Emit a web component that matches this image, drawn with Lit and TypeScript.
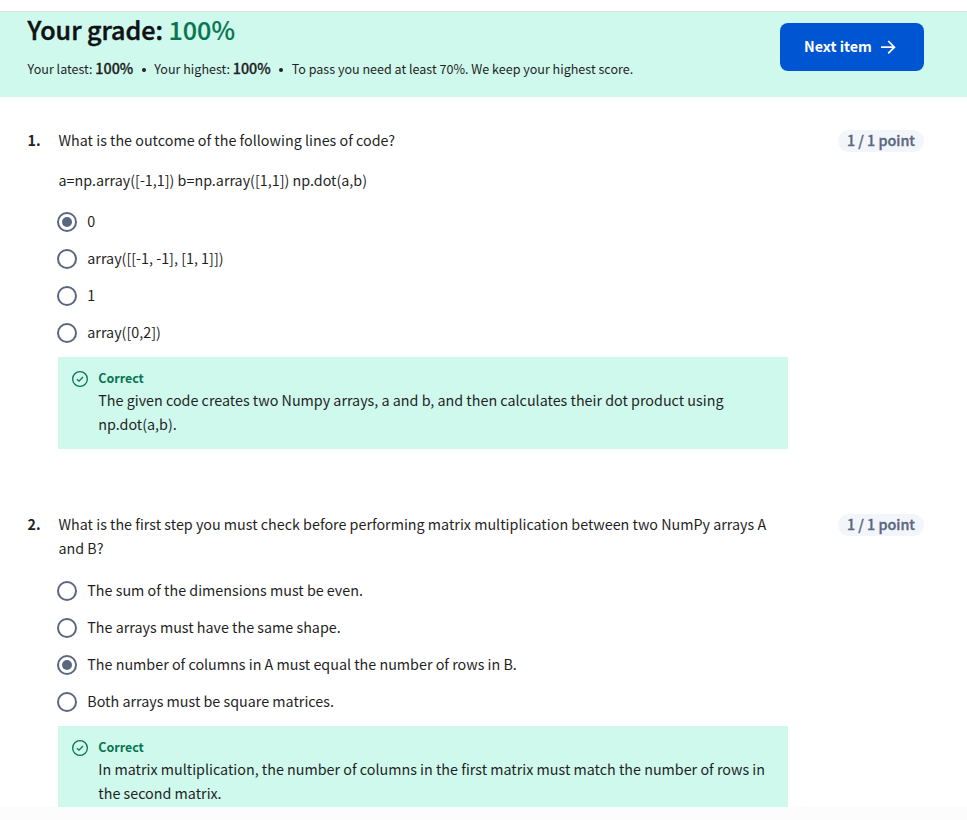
import { LitElement, html, css, svg } from "lit";
import { customElement, property } from "lit/decorators.js";

interface Question {
  number: number;
  prompt: string[];
  options: string[];
  selected: number;
  feedback: string;
}

const QUESTIONS: Question[] = [
  {
    number: 1,
    prompt: [
      "What is the outcome of the following lines of code?",
      "a=np.array([-1,1]) b=np.array([1,1]) np.dot(a,b)",
    ],
    options: ["0", "array([[-1, -1], [1, 1]])", "1", "array([0,2])"],
    selected: 0,
    feedback:
      "The given code creates two Numpy arrays, a and b, and then calculates their dot product using np.dot(a,b).",
  },
  {
    number: 2,
    prompt: [
      "What is the first step you must check before performing matrix multiplication between two NumPy arrays A and B?",
    ],
    options: [
      "The sum of the dimensions must be even.",
      "The arrays must have the same shape.",
      "The number of columns in A must equal the number of rows in B.",
      "Both arrays must be square matrices.",
    ],
    selected: 2,
    feedback:
      "In matrix multiplication, the number of columns in the first matrix must match the number of rows in the second matrix.",
  },
];

@customElement("grade-header")
export class GradeHeader extends LitElement {
  static styles = css`
    :host {
      display: flex;
      justify-content: space-between;
      align-items: flex-start;
      box-sizing: border-box;
      height: 86px;
      padding: 0 43px 0 27.6px;
      border-top: 1px solid #d5e3e6;
      background: #d0f9ed;
    }
    .title {
      margin: -1px 0 0;
      font-size: 25.07px;
      line-height: 36px;
      font-weight: 500;
      color: #0f1114;
      -webkit-text-stroke: 0.5px currentColor;
    }
    .score {
      color: #087551;
      -webkit-text-stroke: 0.2px currentColor;
    }
    .summary {
      display: flex;
      align-items: baseline;
      margin-top: 9px;
      font-size: 12.55px;
      line-height: 24px;
      white-space: pre;
    }
    .summary b {
      font-size: 14.32px;
      font-weight: 500;
      -webkit-text-stroke: 0.3px currentColor;
    }
    .dot {
      align-self: center;
      width: 4px;
      height: 4px;
      margin: 2px 8.5px 0;
      border-radius: 50%;
      background: #1f1f1f;
    }
    .next {
      display: flex;
      align-items: center;
      box-sizing: border-box;
      width: 144px;
      height: 48px;
      margin-top: 11px;
      padding: 0 0 0 24px;
      gap: 8px;
      border: 0;
      border-radius: 8px;
      background: #0056d2;
      color: #fff;
      font-family: inherit;
      font-size: 14.32px;
      font-weight: 700;
      line-height: 24px;
      white-space: nowrap;
    }
    .label {
      margin-top: -2px;
    }
    .arrow {
      display: block;
      flex: none;
    }
  `;

  render() {
    return html`
      <div>
        <h1 class="title">Your grade: <span class="score">100%</span></h1>
        <div class="summary"><span>Your latest: <b>100%</b></span><span class="dot"></span><span>Your highest: <b>100%</b></span><span class="dot"></span><span>To pass you need at least 70%. We keep your highest score.</span></div>
      </div>
      <button class="next">
        <span class="label">Next item</span>
        <svg class="arrow" width="16" height="16" viewBox="0 0 16 16" fill="none" stroke="#fff" stroke-width="1.7">
          <path d="M1 8.2H14.4M8.2 2L14.4 8.2L8.2 14.4" />
        </svg>
      </button>
    `;
  }
}

@customElement("quiz-question")
export class QuizQuestion extends LitElement {
  @property({ attribute: false }) question!: Question;

  static styles = css`
    :host {
      display: grid;
      grid-template-columns: 31px 730px 1fr;
      align-items: start;
      padding: 0 43px 0 27px;
      font-size: 14.32px;
      line-height: 24px;
    }
    .number {
      padding-left: 0.6px;
      font-weight: 700;
    }
    .prompt {
      margin: 0 0 16px;
      padding-left: 0.5px;
    }
    .prompt:last-of-type {
      margin-bottom: 0;
    }
    .options {
      display: flex;
      flex-direction: column;
      margin-top: 12px;
      margin-left: -1px;
    }
    .prompt + .prompt + .options {
      margin-top: 11px;
    }
    .option {
      display: flex;
      align-items: center;
      gap: 10.3px;
      height: 37px;
    }
    .text {
      margin-top: -2px;
    }
    .radio {
      display: flex;
      align-items: center;
      justify-content: center;
      box-sizing: border-box;
      width: 20px;
      height: 20px;
      border: 2px solid #5b6780;
      border-radius: 50%;
    }
    .fill {
      width: 10px;
      height: 10px;
      border-radius: 50%;
      background: #5b6780;
    }
    .feedback {
      display: flex;
      box-sizing: border-box;
      height: 92px;
      margin-top: 6px;
      padding: 11px 14px;
      gap: 10.3px;
      background: #d0f9ed;
    }
    .check {
      display: block;
      flex: none;
      margin-top: 3px;
    }
    .verdict {
      font-size: 12.45px;
      line-height: 20px;
      font-weight: 700;
      color: #087551;
    }
    .points {
      justify-self: end;
      box-sizing: border-box;
      height: 22px;
      margin-top: 2px;
      padding: 0 9px;
      border-radius: 11px;
      background: #f2f5fa;
      color: #5b6780;
      font-weight: 500;
      line-height: 20px;
      white-space: nowrap;
      -webkit-text-stroke: 0.35px currentColor;
    }
  `;

  render() {
    const q = this.question;
    return html`
      <div class="number">${q.number}.</div>
      <div>
        ${q.prompt.map((line) => html`<p class="prompt">${line}</p>`)}
        <div class="options">
          ${q.options.map(
            (option, i) => html`
              <label class="option">
                <span class="radio">${i === q.selected ? html`<span class="fill"></span>` : null}</span>
                <span class="text">${option}</span>
              </label>
            `
          )}
        </div>
        <div class="feedback">
          <svg class="check" width="16" height="16" viewBox="0 0 16 16" fill="none" stroke="#087551" stroke-width="1.3">
            ${svg`<circle cx="8" cy="8" r="7.35" /><path d="M4.9 8.3L7 10.2L11 6" />`}
          </svg>
          <div>
            <div class="verdict">Correct</div>
            <div>${q.feedback}</div>
          </div>
        </div>
      </div>
      <div class="points">1 / 1 point</div>
    `;
  }
}

@customElement("app-root")
export class AppRoot extends LitElement {
  static styles = css`
    :host {
      display: block;
      box-sizing: border-box;
      height: 820px;
      background: #fcfcfc;
      color: #1f1f1f;
      font-family: "Noto Sans CJK SC", "Noto Sans", sans-serif;
    }
    .page {
      box-sizing: border-box;
      height: 807px;
      padding-top: 11px;
      overflow: hidden;
      background: #fff;
    }
    .questions {
      display: flex;
      flex-direction: column;
      gap: 63px;
      margin-top: 31px;
    }
  `;

  render() {
    return html`
      <main class="page">
        <grade-header></grade-header>
        <div class="questions">
          ${QUESTIONS.map((q) => html`<quiz-question .question=${q}></quiz-question>`)}
        </div>
      </main>
    `;
  }
}
